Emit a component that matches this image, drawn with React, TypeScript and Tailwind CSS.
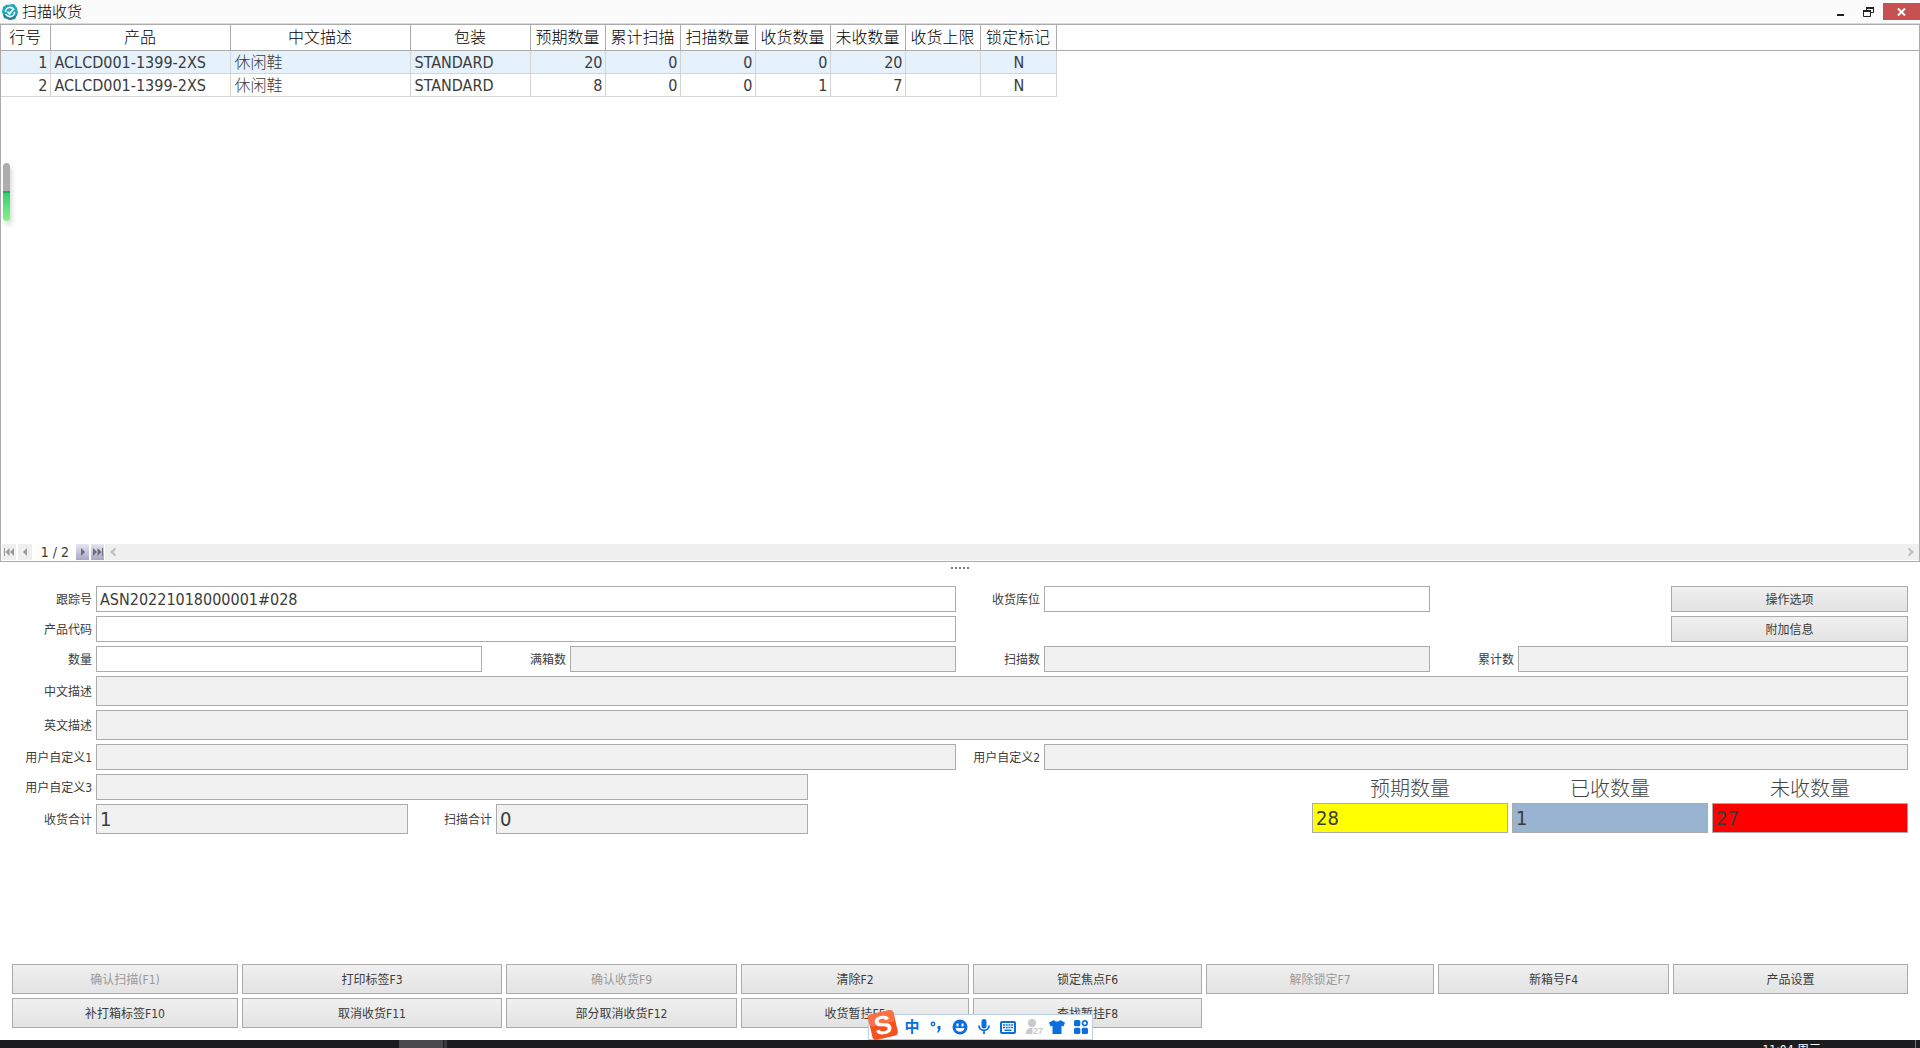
import React, { useId, useState } from 'react';
import clsx from 'clsx';

interface Line {
  no: number;
  sku: string;
  name: string;
  pack: string;
  expected: number;
  totalScanned: number;
  scanned: number;
  received: number;
  open: number;
  limit: string;
  locked: string;
}

const LINES: Line[] = [
  { no: 1, sku: 'ACLCD001-1399-2XS', name: '休闲鞋', pack: 'STANDARD', expected: 20, totalScanned: 0, scanned: 0, received: 0, open: 20, limit: '', locked: 'N' },
  { no: 2, sku: 'ACLCD001-1399-2XS', name: '休闲鞋', pack: 'STANDARD', expected: 8, totalScanned: 0, scanned: 0, received: 1, open: 7, limit: '', locked: 'N' },
];

const COLUMNS: { key: keyof Line; title: string; width: string; align: string }[] = [
  { key: 'no', title: '行号', width: 'w-[49px]', align: 'text-right' },
  { key: 'sku', title: '产品', width: 'w-[180px]', align: 'text-left' },
  { key: 'name', title: '中文描述', width: 'w-[180px]', align: 'text-left font-light' },
  { key: 'pack', title: '包装', width: 'w-[120px]', align: 'text-left' },
  { key: 'expected', title: '预期数量', width: 'w-[75px]', align: 'text-right' },
  { key: 'totalScanned', title: '累计扫描', width: 'w-[75px]', align: 'text-right' },
  { key: 'scanned', title: '扫描数量', width: 'w-[75px]', align: 'text-right' },
  { key: 'received', title: '收货数量', width: 'w-[75px]', align: 'text-right' },
  { key: 'open', title: '未收数量', width: 'w-[75px]', align: 'text-right' },
  { key: 'limit', title: '收货上限', width: 'w-[75px]', align: 'text-right' },
  { key: 'locked', title: '锁定标记', width: 'w-[76px]', align: 'text-center' },
];

const ACTIONS = [
  { label: '确认扫描(F1)', disabled: true },
  { label: '打印标签F3' },
  { label: '确认收货F9', disabled: true },
  { label: '清除F2' },
  { label: '锁定焦点F6' },
  { label: '解除锁定F7', disabled: true },
  { label: '新箱号F4' },
  { label: '产品设置' },
  { label: '补打箱标签F10' },
  { label: '取消收货F11' },
  { label: '部分取消收货F12' },
  { label: '收货暂挂F5' },
  { label: '查找暂挂F8' },
];

function Field({ label, value = '', readOnly, tall, big, className }: {
  label: string;
  value?: string;
  readOnly?: boolean;
  tall?: boolean;
  big?: boolean;
  className?: string;
}) {
  const id = useId();
  const [text, setText] = useState(value);
  return (
    <div className={clsx('flex items-center', className)}>
      <label htmlFor={id} className="w-[84px] shrink-0 pt-[2px] pr-1 text-right text-[12px] leading-4 whitespace-nowrap">
        {label}
      </label>
      <input
        id={id}
        type="text"
        value={text}
        readOnly={readOnly}
        onChange={(e) => setText(e.target.value)}
        className={clsx(
          'min-w-0 flex-1 border border-[#ababab] px-[3px] outline-none',
          tall ? 'h-[30px]' : 'h-[26px]',
          big ? 'text-[20px]' : 'text-[16px]',
          readOnly ? 'bg-[#f1f1f1]' : 'bg-white'
        )}
      />
    </div>
  );
}

function ActionButton({ label, disabled, className }: { label: string; disabled?: boolean; className?: string }) {
  return (
    <button
      type="button"
      disabled={disabled}
      className={clsx(
        'border border-[#ababab] bg-linear-to-b from-[#f0f0f0] to-[#e3e3e3] pt-[2px] text-[12px] leading-4 disabled:text-[#999999]',
        className
      )}
    >
      {label}
    </button>
  );
}

function Total({ label, value, color }: { label: string; value: string; color: string }) {
  const id = useId();
  return (
    <div className="flex flex-col">
      <label htmlFor={id} className="h-[29px] pt-px text-center text-[20px] leading-7 font-light text-[#444444]">{label}</label>
      <input id={id} readOnly value={value} className={clsx('h-[30px] w-full border border-[#ababab] px-[3px] text-[20px] outline-none', color)} />
    </div>
  );
}

function TitleBar() {
  return (
    <header className="flex h-6 shrink-0 items-center border-b border-[#d9d9d9] bg-[#fbfbfb]">
      <svg width="16" height="16" viewBox="0 0 16 16" className="ml-[2px]">
        <path d="M4 1 12 0 15 4 16 9 12 15 8 16 2 13 0 8 1 3Z" fill="#22a6b9" />
        <path d="M1 10 4 12 8 14 13 12 16 9 13 15 8 16 2 14Z" fill="#2b7f92" />
        <circle cx="8" cy="8" r="4.6" fill="none" stroke="#e8fbff" strokeWidth="1.6" strokeDasharray="12 2" />
        <path d="M5.5 7.500 7.500 10 11 5.500" fill="none" stroke="#fff" strokeWidth="1.6" />
      </svg>
      <h1 className="ml-1 text-[15px] leading-5 font-light text-black">扫描收货</h1>
      <div className="ml-auto flex h-full items-start pt-[3px]">
        <button type="button" aria-label="最小化" className="flex h-[17px] w-[26px] items-center justify-center">
          <svg width="8" height="12" viewBox="0 0 8 12"><path d="M0 8h7v2H0z" fill="#222" /></svg>
        </button>
        <button type="button" aria-label="还原" className="flex h-[17px] w-7 items-center justify-center">
          <svg width="11" height="10" viewBox="0 0 11 10" fill="none" stroke="#222">
            <path d="M3.5 4V.5h7v5H8" />
            <path d="M3 1h8" strokeWidth="2" />
            <path d="M.5 4h7v5.500h-7z" />
            <path d="M0 4h8" strokeWidth="2" />
          </svg>
        </button>
        <button type="button" aria-label="关闭" className="ml-px flex h-[17px] w-[37px] items-center justify-center bg-[#c75050]">
          <svg width="9" height="8" viewBox="0 0 9 8"><path d="M1 .5 8 7.500M8 .5 1 7.500" stroke="#fff" strokeWidth="2" /></svg>
        </button>
      </div>
    </header>
  );
}

function Pager() {
  return (
    <div className="mt-auto flex h-[17px] items-stretch pb-px">
      <button type="button" disabled aria-label="第一条" className="ml-px flex w-[14px] items-center justify-center bg-[#efefef]">
        <svg width="10" height="8" viewBox="0 0 10 8" fill="#9a9a9a"><path d="M0 0h1v8H0zM5.500 0v8L1.500 4zM10 0v8L6 4z" /></svg>
      </button>
      <button type="button" disabled aria-label="上一条" className="ml-[2px] flex w-[14px] items-center justify-center bg-[#efefef]">
        <svg width="4" height="8" viewBox="0 0 4 8" fill="#9a9a9a"><path d="M4 0v8L0 4z" /></svg>
      </button>
      <span className="w-11 pl-[2px] text-center text-[14px] leading-[17px]">1 / 2</span>
      <button type="button" aria-label="下一条" className="flex w-[13px] items-center justify-center bg-linear-to-b from-[#e6e6f0] to-[#a9a6c6]">
        <svg width="4" height="8" viewBox="0 0 4 8" fill="#6c6c78"><path d="M0 0v8L4 4z" /></svg>
      </button>
      <button type="button" aria-label="最后一条" className="ml-[2px] flex w-[13px] items-center justify-center bg-linear-to-b from-[#e6e6f0] to-[#a9a6c6]">
        <svg width="10" height="8" viewBox="0 0 10 8" fill="#6c6c78"><path d="M9 0h1v8H9zM0 0v8L4 4zM4.500 0v8L8.500 4z" /></svg>
      </button>
      <div className="ml-px flex flex-1 items-center justify-between bg-[#efefef] px-[5px]">
        <svg width="6" height="8" viewBox="0 0 6 8" fill="none" stroke="#bdbdbd" strokeWidth="2"><path d="M5.500.5 1.500 4 5.500 7.500" /></svg>
        <svg width="6" height="8" viewBox="0 0 6 8" fill="none" stroke="#bdbdbd" strokeWidth="2"><path d="M.5.5 4.500 4 .5 7.500" /></svg>
      </div>
    </div>
  );
}

function ImeBar() {
  return (
    <div className="absolute bottom-2 left-[868px] flex h-[26px] w-[225px] items-center border border-[#b9cfe8] bg-white text-[#0a6fdc]">
      <svg width="32" height="32" viewBox="0 0 32 32" className="absolute -top-[6px] -left-[2px] overflow-visible">
        <g transform="rotate(-13 16 16)">
          <rect x="3" y="3" width="26" height="26" rx="4" fill="#f4511e" />
          <rect x="3" y="3" width="26" height="12" rx="4" fill="#ff7043" />
          <text x="16" y="25" textAnchor="middle" fontSize="26" fontWeight="bold" fontFamily="Liberation Sans" fill="#fff">S</text>
        </g>
      </svg>
      <div className="ml-[35px] flex flex-1 items-center">
        <span className="w-4 text-center text-[15px] leading-5 font-bold">中</span>
        <svg width="12" height="12" viewBox="0 0 12 12" className="ml-[10px]">
          <circle cx="3" cy="3" r="1.700" fill="none" stroke="currentColor" strokeWidth="1.500" />
          <path d="M7.500 5h3v3.500L8.500 11.500H7L8.500 8H7.500z" fill="currentColor" />
        </svg>
        <svg width="16" height="16" viewBox="0 0 16 16" className="ml-[10px]">
          <circle cx="8" cy="8" r="7.500" fill="currentColor" />
          <path d="M4.500 4.500h2v3h-2zM9.500 4.500h2v3h-2zM3.500 9h9c-.5 5-8.500 5-9 0z" fill="#fff" />
        </svg>
        <svg width="12" height="16" viewBox="0 0 12 16" className="ml-[10px]">
          <rect x="3.500" y="0" width="5" height="9.500" rx="2.500" fill="currentColor" />
          <path d="M1 6.500c0 6.500 10 6.500 10 0M6 11.500V15" fill="none" stroke="currentColor" strokeWidth="1.800" />
        </svg>
        <svg width="16" height="13" viewBox="0 0 16 13" className="ml-[10px]">
          <rect x="1" y="1" width="14" height="11" rx="1" fill="none" stroke="currentColor" strokeWidth="2" />
          <path d="M3 4h10M3 6.500h10" stroke="currentColor" strokeWidth="1.500" strokeDasharray="2 .7" />
          <path d="M4.500 9.300h7" stroke="currentColor" strokeWidth="1.500" />
        </svg>
        <svg width="17" height="16" viewBox="0 0 17 16" className="ml-[10px] overflow-visible" fill="#c9c9c9">
          <circle cx="6" cy="4" r="4" />
          <path d="M0 15c0-5 2-6 6-6h1v6z" />
          <text x="12" y="15" textAnchor="middle" fontSize="9" fontWeight="bold" fontFamily="Liberation Sans" stroke="#fff" strokeWidth="2" paintOrder="stroke">27</text>
        </svg>
        <svg width="16" height="14" viewBox="0 0 16 14" className="ml-[6px]" fill="currentColor">
          <path d="M5 0c1 2 5 2 6 0l5 2.500-1.500 4-2-.7V14h-9V5.800l-2 .7L0 2.500z" />
        </svg>
        <svg width="14" height="14" viewBox="0 0 14 14" className="ml-[9px]" fill="currentColor">
          <rect width="6.300" height="6.300" rx="1.500" />
          <rect y="7.700" width="6.300" height="6.300" rx="1.500" />
          <rect x="7.700" y="7.700" width="6.300" height="6.300" rx="1.500" />
          <circle cx="10.800" cy="3.200" r="2.300" fill="none" stroke="currentColor" strokeWidth="1.700" />
        </svg>
      </div>
    </div>
  );
}

export default function App() {
  const [selected, setSelected] = useState(1);

  return (
    <div className="relative flex h-screen flex-col overflow-hidden bg-white font-['DejaVu_Sans_Condensed','Noto_Sans_CJK_SC',sans-serif] text-[#3b3b3b]">
      <TitleBar />

      {/* Receipt lines */}
      <section className="flex min-h-0 flex-[536] flex-col border border-[#ababab]">
        <div className="flex">
          <table className="table-fixed border-collapse">
            <thead>
              <tr className="h-[25px]">
                {COLUMNS.map((col) => (
                  <th key={col.key} className={clsx('border-r border-b border-[#ababab] px-0 pt-[2px] pb-0 text-[16px] leading-[22px] font-light whitespace-nowrap text-black', col.width)}>
                    {col.title}
                  </th>
                ))}
              </tr>
            </thead>
            <tbody>
              {LINES.map((line) => (
                <tr key={line.no} onClick={() => setSelected(line.no)} className={clsx('h-[23px]', line.no === selected && 'bg-[#e5f1fb]')}>
                  {COLUMNS.map((col) => (
                    <td key={col.key} className={clsx('border-r border-b border-[#d4d4d4] pt-[2px] pr-[2px] pb-0 pl-1 text-[16px] leading-5', col.align)}>
                      {line[col.key]}
                    </td>
                  ))}
                </tr>
              ))}
            </tbody>
          </table>
          <div className="h-[26px] flex-1 border-b border-[#ababab]" />
        </div>
        <Pager />
      </section>

      {/* Scan form */}
      <section className="flex min-h-0 flex-[466] flex-col px-3 pb-3">
        <div className="flex h-6 shrink-0 justify-center gap-[2px] pt-[5px]">
          {[0, 1, 2, 3, 4].map((dot) => (
            <span key={dot} className="size-[2px] bg-[#777777]" />
          ))}
        </div>

        <form className="grid grid-cols-[470fr_470fr_470fr_474fr] gap-1">
          <Field label="跟踪号" value="ASN20221018000001#028" className="col-span-2" />
          <Field label="收货库位" />
          <ActionButton label="操作选项" className="w-1/2 justify-self-end" />
          <Field label="产品代码" className="col-span-2" />
          <ActionButton label="附加信息" className="col-start-4 w-1/2 justify-self-end" />
          <Field label="数量" />
          <Field label="满箱数" readOnly />
          <Field label="扫描数" readOnly />
          <Field label="累计数" readOnly />
          <Field label="中文描述" readOnly tall className="col-span-4" />
          <Field label="英文描述" readOnly tall className="col-span-4" />
          <Field label="用户自定义1" readOnly className="col-span-2" />
          <Field label="用户自定义2" readOnly className="col-span-2" />
        </form>

        <div className="mt-1 grid grid-cols-[796fr_504fr_596fr]">
          <div className="grid grid-cols-2 gap-1">
            <Field label="用户自定义3" readOnly className="col-span-2" />
            <Field label="收货合计" value="1" readOnly tall big />
            <Field label="扫描合计" value="0" readOnly tall big />
          </div>
          <div className="col-start-3 grid grid-cols-3 gap-1">
            <Total label="预期数量" value="28" color="bg-[#ffff00]" />
            <Total label="已收数量" value="1" color="bg-[#99b4d1]" />
            <Total label="未收数量" value="27" color="bg-[#ff0000]" />
          </div>
        </div>

        <div className="mt-auto grid auto-rows-[30px] grid-cols-[226fr_260fr_231fr_228fr_229fr_228fr_231fr_235fr] gap-1">
          {ACTIONS.map((action) => (
            <ActionButton key={action.label} label={action.label} disabled={action.disabled} />
          ))}
        </div>
      </section>

      {/* Desktop taskbar */}
      <footer className="flex h-2 shrink-0 items-start overflow-hidden bg-[#1c1c1f]">
        <span className="ml-[399px] h-2 w-11 bg-[#4a4a4c]" />
        <span className="ml-px h-2 w-[3px] bg-[#3a3a3c]" />
        <span className="mt-[2px] mr-[94px] ml-auto text-[12px] leading-4 whitespace-nowrap text-white">11:04 周三</span>
        <span className="mr-1 h-2 w-px bg-[#77777a]" />
      </footer>

      {/* Floating level meter */}
      <div className="absolute top-[163px] left-[3px] flex h-[58px] w-[7px] flex-col overflow-hidden rounded-full shadow-[2px_4px_5px_rgba(0,0,0,0.15)]">
        <span className="flex-1 bg-[#adadad]" />
        <span className="flex-1 border-t-2 border-[#1fae5a] bg-linear-to-b from-[#2fcf6f] to-[#86f08c]" />
      </div>

      <ImeBar />
    </div>
  );
}
